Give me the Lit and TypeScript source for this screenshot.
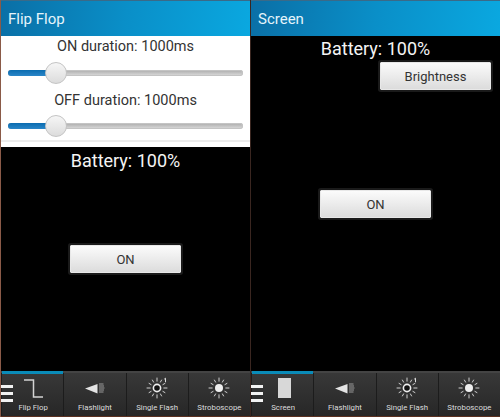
import { LitElement, html, css, svg } from "lit";
import { customElement, property } from "lit/decorators.js";

const rayPath = Array.from({ length: 12 }, (_, i) => {
  const a = (i * Math.PI) / 6;
  const long = i % 3 === 0;
  const r1 = 6.8;
  const r2 = long ? 10 : 9.2;
  const p = (r: number) => `${(11 + r * Math.cos(a)).toFixed(2)} ${(11 + r * Math.sin(a)).toFixed(2)}`;
  return `M${p(r1)}L${p(r2)}`;
}).join("");

const rays = svg`<path d=${rayPath} stroke="#cfcfcf" stroke-width="1" stroke-linecap="round" fill="none"/>`;

const icons: Record<string, unknown> = {
  flip: html`<svg class="ic" width="20" height="19" viewBox="0 0 20 19"><path d="M0 1h9.5v17H19" fill="none" stroke="#d4d4d4" stroke-width="1.5"/></svg>`,
  screen: html`<svg class="ic" width="13" height="20" viewBox="0 0 13 20"><rect width="13" height="20" fill="#d8d8d8"/></svg>`,
  flash: html`<svg class="ic" width="20" height="11" viewBox="0 0 20 11"><path d="M0 5.5L12.5 1v9.5z" fill="#e4e4e4"/><path d="M14 1h4.5M14 3h5M14 5h5.5M14 7h5M14 9h4.5" stroke="#9a9a9a" stroke-width="1"/></svg>`,
  single: html`<svg class="ic" width="22" height="22" viewBox="0 0 22 22">${rays}<circle cx="11" cy="11" r="3.6" fill="#111" stroke="#eee" stroke-width="1.6"/><path d="M18.2 2.2l1.3-1v4" fill="none" stroke="#ddd" stroke-width="1"/></svg>`,
  strobe: html`<svg class="ic" width="22" height="22" viewBox="0 0 22 22">${rays}<circle cx="11" cy="11" r="4" fill="#eee"/></svg>`,
};

@customElement("tool-bar")
class ToolBar extends LitElement {
  @property() first = "Flip Flop";
  @property() icon = "flip";
  static styles = css`
    :host { display: flex; height: 46px; background: linear-gradient(#383838, #272727); position: relative; border-top: 2px solid #444; border-bottom: 1px solid #5a3020; box-sizing: border-box; font-family: Roboto, sans-serif; }
    .tab { flex: 1 1 0; display: flex; flex-direction: column; align-items: center; border-left: 1px solid #1c1c1c; position: relative; color: #dcdcdc; font-size: 7.8px; }
    .tab:first-of-type { border-left: 0; }
    .iconbox { height: 30px; display: flex; align-items: center; justify-content: center; }
    .label { line-height: 10px; white-space: nowrap; }
    .sel::before { content: ""; position: absolute; top: -2px; left: 0; right: 0; height: 3px; background: #0a8bb8; }
    .sel .iconbox { padding-left: 3px; }
    .sel .label { padding-left: 1px; }
    .menu { position: absolute; left: 0; top: 12px; width: 12px; height: 17px; display: flex; flex-direction: column; justify-content: space-between; z-index: 1; }
    .menu i { display: block; height: 3px; background: #f2f2f2; }
  `;
  render() {
    return html`
      <div class="menu"><i></i><i></i><i></i></div>
      <div class="tab sel"><div class="iconbox">${icons[this.icon]}</div><div class="label">${this.first}</div></div>
      <div class="tab"><div class="iconbox">${icons.flash}</div><div class="label">Flashlight</div></div>
      <div class="tab"><div class="iconbox">${icons.single}</div><div class="label">Single Flash</div></div>
      <div class="tab"><div class="iconbox">${icons.strobe}</div><div class="label">Stroboscope</div></div>
    `;
  }
}

@customElement("app-root")
export class AppRoot extends LitElement {
  static styles = css`
    :host { display: flex; width: 500px; height: 417px; background: #000; font-family: Roboto, "Liberation Sans", sans-serif; overflow: hidden; }
    .panel { width: 250px; height: 417px; display: flex; flex-direction: column; border-left: 1px solid #8a5a48; box-sizing: border-box; }
    .panel.right { border-left-color: #3a2620; }
    .header { height: 36px; flex: none; background: linear-gradient(100deg, #0a6fa6 0%, #0a8fc8 50%, #0aa8e0 100%); border-top: 1px solid #3a6a88; color: #e4f4fb; font-size: 15px; line-height: 37px; padding-left: 7px; box-sizing: border-box; }
    .body { flex: 1; display: flex; flex-direction: column; min-height: 0; }
    .settings { background: #fff; height: 111px; box-sizing: border-box; color: #333; font-size: 14.5px; text-align: center; position: relative; }
    .cap { line-height: 22px; height: 20px; }
    .cap.off { line-height: 24px; }
    .slider { height: 33px; margin: 0 7px; display: flex; align-items: center; position: relative; }
    .track { flex: 1; height: 6px; border-radius: 3px; background: linear-gradient(#aaa, #ddd); box-shadow: inset 0 0 0 1px #c4c4c4; overflow: hidden; }
    .fill { height: 100%; width: 16%; background: linear-gradient(#0a6cb0, #2a86c8); }
    .knob { position: absolute; left: 37px; top: 6px; border-radius: 50%; background: linear-gradient(#f6f6f6, #dcdcdc); border: 1px solid #c4c4c4; width: 20px; height: 20px; }
    .rule { position: absolute; left: 0; right: 0; bottom: 5px; height: 2px; background: #ececec; }
    .black { flex: 1; background: #000; display: flex; flex-direction: column; color: #f4f4f4; min-height: 0; }
    .batt { font-size: 18px; line-height: 24px; text-align: center; height: 24px; }
    .btn { width: 111px; height: 28px; box-sizing: border-box; background: linear-gradient(#fbfbfb, #dcdcdc); color: #333; font-size: 13px; display: flex; align-items: center; justify-content: center; border: 1px solid #e8e8e8; box-shadow: 0 0 0 2px #1a1a1a; border-radius: 1px; }
    .on-left { margin: 72px 0 0 69px; }
    .bright { margin: 1px 0 0 129px; }
    .on-right { margin: 100px 0 0 69px; }
    .top { padding-top: 1px; }
    .left-black { padding-top: 2px; }
    tool-bar { flex: none; }
  `;
  private slider() {
    return html`<div class="slider"><div class="track"><div class="fill"></div></div><div class="knob"></div></div>`;
  }
  render() {
    return html`
      <section class="panel">
        <div class="header">Flip Flop</div>
        <div class="body">
          <div class="settings">
            <div class="cap">ON duration: 1000ms</div>
            ${this.slider()}
            <div class="cap off">OFF duration: 1000ms</div>
            ${this.slider()}
            <div class="rule"></div>
          </div>
          <div class="black left-black">
            <div class="batt">Battery: 100%</div>
            <div class="btn on-left">ON</div>
          </div>
        </div>
        <tool-bar first="Flip Flop" icon="flip"></tool-bar>
      </section>
      <section class="panel right">
        <div class="header">Screen</div>
        <div class="body">
          <div class="black top">
            <div class="batt">Battery: 100%</div>
            <div class="btn bright">Brightness</div>
            <div class="btn on-right">ON</div>
          </div>
        </div>
        <tool-bar first="Screen" icon="screen"></tool-bar>
      </section>
    `;
  }
}
